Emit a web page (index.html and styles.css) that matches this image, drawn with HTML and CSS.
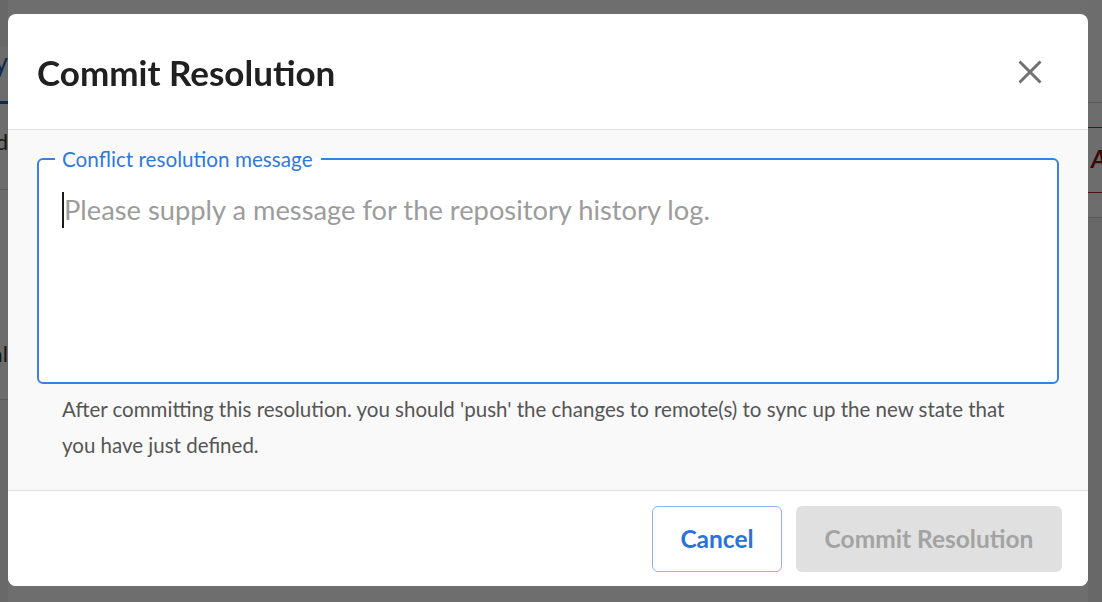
FILE: index.html
```html
<!DOCTYPE html>
<html lang="en">
<head>
<meta charset="utf-8">
<title>Commit Resolution</title>
<link rel="stylesheet" href="styles.css">
</head>
<body>
<div class="app">
  <div class="side">
    <div class="side-top"></div>
    <div class="side-tab"><span>History</span></div>
    <div class="side-row"><span>Merged</span></div>
    <div class="side-row tall"><span>Local</span></div>
    <div class="side-rest"></div>
  </div>
  <div class="main"></div>
  <div class="rside">
    <div class="r-top"></div>
    <div class="r-row gray"></div>
    <div class="r-row red"><span class="r-a">A</span></div>
    <div class="r-row"></div>
    <div class="r-rest"></div>
  </div>
</div>

<div class="backdrop">
  <div class="dialog" role="dialog" aria-labelledby="dlg-title">
    <div class="dialog-header">
      <h2 id="dlg-title" class="dialog-title">Commit Resolution</h2>
      <button class="close-btn" aria-label="Close">
        <svg width="24" height="24" viewBox="0 0 24 24"><path d="M1.5 1.5 L22.5 22.5 M22.5 1.5 L1.5 22.5" stroke="#707070" stroke-width="3" stroke-linecap="butt" fill="none"/></svg>
      </button>
    </div>
    <div class="dialog-body">
      <fieldset class="field">
        <legend class="field-label">Conflict resolution message</legend>
        <div class="field-input"><span class="caret"></span><span class="placeholder">Please supply a message for the repository history log.</span></div>
      </fieldset>
      <p class="helper">After committing this resolution. you should 'push' the changes to remote(s) to sync up the new state that you have just defined.</p>
    </div>
    <div class="dialog-footer">
      <button class="btn btn-outline">Cancel</button>
      <button class="btn btn-disabled" disabled>Commit Resolution</button>
    </div>
  </div>
</div>
</body>
</html>
```
FILE: styles.css
```css
* { box-sizing: border-box; }
html, body { margin: 0; padding: 0; }
body {
  width: 1102px;
  height: 602px;
  overflow: hidden;
  font-family: Lato, "Open Sans", sans-serif;
  background: #ffffff;
}

/* background application (dimmed) */
.app {
  display: flex;
  height: 602px;
}
.side {
  width: 8px;
  display: flex;
  flex-direction: column;
  overflow: hidden;
  background: #fbfbfb;
}
.side-top { height: 46px; background: #f2f2f2; flex: none; }
.side-tab {
  height: 58px;
  display: flex;
  justify-content: flex-end;
  align-items: flex-start;
  border-bottom: 3px solid #1f5fbf;
  color: #1f5fbf;
  font-size: 26px;
  white-space: nowrap;
  flex: none;
}
.side-row {
  height: 86px;
  display: flex;
  justify-content: flex-end;
  padding-top: 24px;
  color: #333;
  font-size: 22px;
  white-space: nowrap;
  border-bottom: 1px solid #d6d6d6;
  flex: none;
}
.side-row.tall { height: 210px; padding-top: 150px; }
.side-rest { flex: 1; background: #f3f3f3; }
.main { flex: 1; }
.rside {
  width: 14px;
  display: flex;
  flex-direction: column;
  background: #fdfdfd;
}
.r-top { height: 103px; border-bottom: 1px solid #d0d0d0; flex: none; }
.r-row { height: 25px; flex: none; border-bottom: 1px solid #cfcfcf; }
.r-row.gray { height: 25px; border-bottom: 1px solid #a03030; }
.r-row.red {
  height: 65px;
  border-bottom: 1px solid #a03030;
  padding: 16px 0 0 3px;
  color: #8b1010;
  font-weight: 700;
  font-style: italic;
  font-size: 24px;
  overflow: hidden;
}
.r-rest { flex: 1; background: #f0f0f0; }

/* overlay */
.backdrop {
  position: fixed;
  inset: 0;
  background: rgba(0, 0, 0, 0.57);
  padding: 14px 14px 16px 8px;
  display: flex;
}
.dialog {
  width: 1080px;
  height: 572px;
  background: #ffffff;
  border-radius: 8px;
  overflow: hidden;
  display: flex;
  flex-direction: column;
}
.dialog-header {
  height: 116px;
  flex: none;
  display: flex;
  align-items: center;
  justify-content: space-between;
  padding: 0 46px 0 29px;
  border-bottom: 1px solid #e1e1e1;
}
.dialog-title {
  margin: 0;
  font-size: 35px;
  font-weight: 700;
  color: #202020;
  letter-spacing: 0;
}
.close-btn {
  border: 0;
  background: transparent;
  padding: 0;
  width: 24px;
  height: 24px;
  display: flex;
}
.dialog-body {
  flex: 1;
  background: #f9f9f9;
  padding: 18px 29px 0 29px;
  border-bottom: 1px solid #e1e1e1;
}
.field {
  margin: 0;
  height: 236px;
  border: 2px solid #3a80e4;
  border-radius: 6px;
  padding: 0 0 0 16px;
  background: #ffffff;
}
.field-label {
  padding: 0 8px 0 7px;
  font-size: 20.7px;
  line-height: 22px;
  color: #2f78df;
}
.field-input {
  display: flex;
  align-items: flex-start;
  padding: 22px 0 0 7px;
}
.caret {
  width: 2px;
  height: 36px;
  background: #1a1a1a;
  flex: none;
}
.placeholder {
  font-size: 27.3px;
  line-height: 36px;
  color: #9c9c9c;
  white-space: nowrap;
}
.helper {
  margin: 7px 25px 0 25px;
  font-size: 20.5px;
  line-height: 36px;
  color: #555555;
}
.dialog-footer {
  height: 95px;
  flex: none;
  display: flex;
  align-items: center;
  justify-content: flex-end;
  gap: 14px;
  padding: 0 26px 0 0;
  background: #ffffff;
}
.btn {
  height: 66px;
  border-radius: 6px;
  font-family: inherit;
  font-size: 24.5px;
  font-weight: 700;
  padding: 0;
}
.btn-outline {
  width: 130px;
  background: #ffffff;
  border: 1px solid #8db4ec;
  color: #2a73d8;
}
.btn-disabled {
  width: 266px;
  background: #e0e0e0;
  border: 0;
  color: #a3a3a3;
}
```
